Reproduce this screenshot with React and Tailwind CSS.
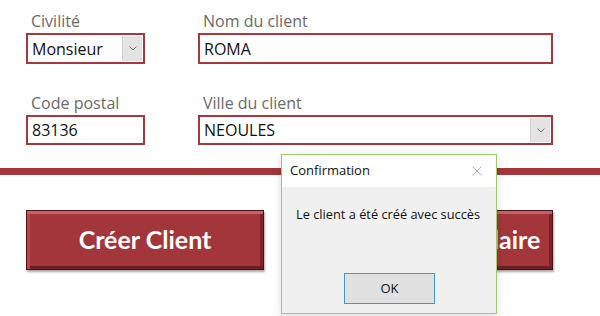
import React from "react";

function Chevron() {
  return (
    <svg width="8" height="5" viewBox="0 0 8 5" fill="none">
      <path d="M0.5 0.5 L4 4 L7.5 0.5" stroke="#707070" strokeWidth="1" />
    </svg>
  );
}

function Field({ label, value, width, height, dropdown }) {
  return (
    <div className="flex flex-col" style={{ width }}>
      <div className="h-[22px] pl-[5px] text-[16px] leading-[20px] text-[#6a6a6a]">{label}</div>
      <div
        className={`flex items-stretch border-2 border-[#a8363d] bg-white ${height}`}
      >
        <div className="flex-1 flex items-center pl-[4px] text-[16px] text-[#111]">{value}</div>
        {dropdown && (
          <div className="w-[20px] my-[1px] mr-[1px] bg-[#e3e3e3] border-l border-[#cfcfcf] flex items-center justify-center">
            <Chevron />
          </div>
        )}
      </div>
    </div>
  );
}

function BigButton({ children }) {
  return (
    <div className="w-[238px] h-[60px] bg-[#a3363b] border border-[#4a1418] shadow-[inset_0_3px_0_#c85f63,inset_3px_0_0_#b8474c,inset_0_-3px_0_#6e1f24,inset_-3px_0_0_#7c2328,1px_2px_2px_rgba(0,0,0,0.35)] flex items-center justify-center text-white font-bold text-[25px] font-['Lato',sans-serif] whitespace-nowrap">
      {children}
    </div>
  );
}

export default function App() {
  return (
    <div className="relative w-[600px] h-[316px] bg-white overflow-hidden font-['Open_Sans',sans-serif]">
      <div className="pt-[11px] pl-[26px] flex flex-col">
        <div className="flex gap-[53px]">
          <Field label="Civilité" value="Monsieur" width="119px" height="h-[31px]" dropdown />
          <Field label="Nom du client" value="ROMA" width="355px" height="h-[31px]" />
        </div>
        <div className="flex gap-[53px] mt-[29px]">
          <Field label="Code postal" value="83136" width="119px" height="h-[30px]" />
          <Field label="Ville du client" value="NEOULES" width="355px" height="h-[30px]" dropdown />
        </div>
      </div>
      <div className="mt-[23px] h-[7px] bg-[#a3363b]" />
      <div className="mt-[35px] pl-[26px] flex gap-[51px]">
        <BigButton>Créer Client</BigButton>
        <BigButton>
          <span className="ml-[14px]">Effacer formulaire</span>
        </BigButton>
      </div>

      <div className="absolute left-[281px] top-[154px] w-[216px] h-[160px] border border-[#9fcc6b] bg-[#f0f0f0] flex flex-col shadow-[0_2px_8px_rgba(0,0,0,0.15)]">
        <div className="h-[32px] bg-white flex items-center justify-between pl-[8px] pr-[14px]">
          <span className="text-[13px] text-[#111]">Confirmation</span>
          <svg width="10" height="10" viewBox="0 0 10 10">
            <path d="M0.5 0.5 L9.5 9.5 M9.5 0.5 L0.5 9.5" stroke="#b0b0b0" strokeWidth="1" />
          </svg>
        </div>
        <div className="pt-[18px] pl-[14px] text-[12.8px] text-[#111] whitespace-nowrap">Le client a été créé avec succès</div>
        <div className="flex-1" />
        <div className="flex justify-center pb-[9px] pl-[1px]">
          <div className="w-[91px] h-[31px] bg-[#e1e1e1] border border-[#3d97dd] flex items-center justify-center text-[13px] text-[#111]">
            OK
          </div>
        </div>
      </div>
    </div>
  );
}
